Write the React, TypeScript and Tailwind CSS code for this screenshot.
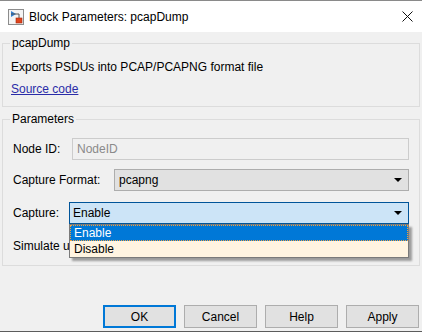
import React from 'react';

const font = { fontFamily: '"Liberation Sans", Arial, sans-serif' };

function BlockIcon() {
  return (
    <svg width="16" height="16" viewBox="0 0 16 16">
      <rect x="0.5" y="0.5" width="15" height="15" fill="#f4f4f4" stroke="#8c8c8c" />
      <path d="M3 2 L3 8 L8 5 Z" fill="#2f7fd0" />
      <path d="M3 5 L11 5 L11 9" fill="none" stroke="#555" strokeWidth="1" />
      <rect x="8" y="9" width="6" height="5" fill="#e0441c" stroke="#a32a10" strokeWidth="0.6" />
    </svg>
  );
}

function Arrow() {
  return (
    <svg width="8" height="4" viewBox="0 0 8 4" className="shrink-0">
      <path d="M0 0 L8 0 L4 4 Z" fill="#000" />
    </svg>
  );
}

export default function App() {
  return (
    <div
      className="w-[422px] h-[332px] flex flex-col bg-[#f0f0f0] border-t border-t-[#8a8a8a] border-b border-b-[#5c5c5c] text-[12px] leading-[16px] text-black overflow-hidden"
      style={font}
    >
      {/* title bar */}
      <div className="h-[31px] shrink-0 bg-white flex items-center pl-[8px] pr-[9px]">
        <BlockIcon />
        <span className="ml-[5px] flex-1 text-[12px]">Block Parameters: pcapDump</span>
        <svg width="11" height="11" viewBox="0 0 11 11">
          <path d="M0.5 0.5 L10.5 10.5 M10.5 0.5 L0.5 10.5" stroke="#111" strokeWidth="1" />
        </svg>
      </div>

      {/* description group */}
      <fieldset className="mt-[3px] mx-[2px] border border-[#dcdcdc]">
        <legend className="ml-[7px] px-[2px] leading-[16px]">pcapDump</legend>
        <div className="pl-[8px] pt-[8px] pb-[9px]">
          <div className="h-[16px]">Exports PSDUs into PCAP/PCAPNG format file</div>
          <div className="mt-[6px] h-[16px]">
            <span className="text-[#2a2ca8] underline">Source code</span>
          </div>
        </div>
      </fieldset>

      {/* parameters group */}
      <fieldset className="mt-[4px] mx-[2px] border border-[#dcdcdc]">
        <legend className="ml-[7px] px-[2px] leading-[16px]">Parameters</legend>
        <div className="pl-[10px] pr-[10px] pt-[11px] pb-[8px] flex flex-col">
          <div className="flex items-center h-[22px]">
            <span className="w-[59px] shrink-0">Node ID:</span>
            <div className="flex-1 h-[22px] border border-[#cccccc] bg-[#f0f0f0] flex items-center pl-[4px] text-[#8a8a8a]">
              NodeID
            </div>
          </div>
          <div className="flex items-center h-[22px] mt-[9px]">
            <span className="w-[101px] shrink-0">Capture Format:</span>
            <div className="flex-1 h-[22px] border border-[#adadad] bg-[#e1e1e1] flex items-center pl-[4px] pr-[6px]">
              <span className="flex-1">pcapng</span>
              <Arrow />
            </div>
          </div>
          <div className="flex items-center h-[22px] mt-[11px]">
            <span className="w-[56px] shrink-0">Capture:</span>
            <div className="relative flex-1 h-[22px]">
              <div className="h-[22px] border border-[#005499] bg-[#cce4f7] flex items-center pl-[3px] pr-[6px]">
                <span className="flex-1">Enable</span>
                <Arrow />
              </div>
              <div className="absolute left-0 right-0 top-full z-10 border border-[#7a7a7a] bg-[#fff4e1] shadow-[3px_3px_2px_rgba(0,0,0,0.35)]">
                <div className="h-[16px] bg-[#0078d7] text-white border border-dotted border-[#f0a040] flex items-center pl-[3px]">
                  Enable
                </div>
                <div className="h-[16px] flex items-center pl-[4px]">Disable</div>
              </div>
            </div>
          </div>
          <div className="flex items-center h-[22px] mt-[11px]">
            <span className="w-[56px] overflow-hidden whitespace-nowrap">Simulate using:</span>
          </div>
        </div>
      </fieldset>

      {/* buttons */}
      <div className="mt-auto flex justify-end gap-[8px] pr-[3px] pb-[3px]">
        <button className="w-[73px] h-[23px] bg-[#e1e1e1] border-2 border-[#0078d7]">OK</button>
        <button className="w-[73px] h-[23px] bg-[#e1e1e1] border border-[#adadad]">Cancel</button>
        <button className="w-[73px] h-[23px] bg-[#e1e1e1] border border-[#adadad]">Help</button>
        <button className="w-[73px] h-[23px] bg-[#e1e1e1] border border-[#adadad]">Apply</button>
      </div>
    </div>
  );
}
